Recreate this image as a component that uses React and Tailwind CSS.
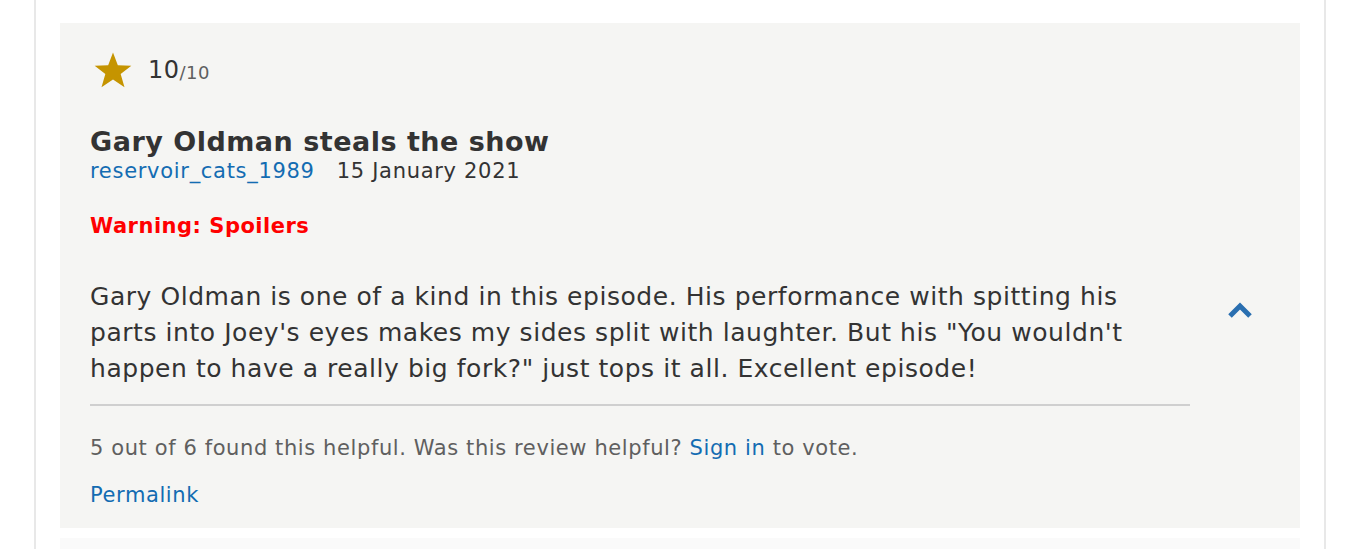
import React from "react";

export default function App() {
  return (
    <div className="w-[1362px] h-[549px] bg-white overflow-hidden" style={{ fontFamily: '"DejaVu Sans", Verdana, sans-serif' }}>
      <div className="ml-[34px] mr-[36px] h-full border-x-2 border-[#e8e8e8] pt-[23px] px-[24px]">
        <div className="bg-[#f5f5f3] pl-[30px] pr-[30px] pt-[26px] pb-[20px] flex">
          <div className="w-[1100px]">
            <div className="flex items-center h-[42px]">
              <svg width="42" height="40" viewBox="0 0 24 24" className="ml-[2px]">
                <path fill="#c59400" d="M12 1.5l2.9 7.6 8.1.3-6.4 5 2.3 7.9L12 17.7l-6.9 4.6 2.3-7.9-6.4-5 8.1-.3z" />
              </svg>
              <span className="ml-[14px] text-[24px] tracking-[0.5px] text-[#333]">10</span>
              <span className="text-[18px] tracking-[0.5px] text-[#5f5f5f] mt-[4px]">/10</span>
            </div>
            <div className="mt-[35px] text-[27px] tracking-[0.5px] font-bold text-[#333] leading-[32px]">Gary Oldman steals the show</div>
            <div className="flex text-[21px] tracking-[0.7px] leading-[26px]">
              <span className="text-[#136cb2]">reservoir_cats_1989</span>
              <span className="ml-[22px] text-[#333]">15 January 2021</span>
            </div>
            <div className="mt-[29px] text-[21px] tracking-[0.5px] font-bold text-[#ff0000] leading-[26px]">Warning: Spoilers</div>
            <div className="mt-[40px] text-[25px] tracking-[0.55px] leading-[36px] text-[#333] pr-[40px]">
              Gary Oldman is one of a kind in this episode. His performance with spitting his parts into Joey's eyes makes my sides split with laughter. But his "You wouldn't happen to have a really big fork?" just tops it all. Excellent episode!
            </div>
            <div className="mt-[17px] h-[2px] bg-[#cfcfcf]" />
            <div className="mt-[29px] text-[21px] tracking-[0.6px] leading-[26px] text-[#5f5f5f]">
              5 out of 6 found this helpful. Was this review helpful? <span className="text-[#136cb2]">Sign in</span> to vote.
            </div>
            <div className="mt-[21px] text-[21px] tracking-[0.6px] leading-[26px] text-[#136cb2]">Permalink</div>
          </div>
          <div className="flex-1 flex justify-center pl-[20px]">
            <svg width="26" height="18" viewBox="0 0 26 18" className="mt-[252px]">
              <path d="M3 15 L13 5 L23 15" fill="none" stroke="#2a6fb0" strokeWidth="5" />
            </svg>
          </div>
        </div>
        <div className="mt-[10px] h-[40px] bg-[#fafafa]" />
      </div>
    </div>
  );
}
